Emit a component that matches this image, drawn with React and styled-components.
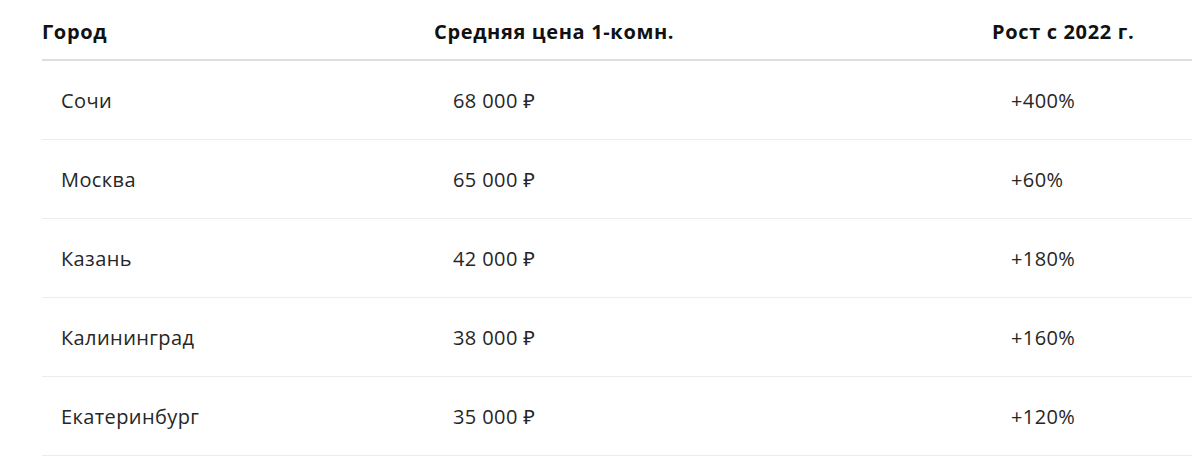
import React from "react";
import styled, { createGlobalStyle } from "styled-components";

const Global = createGlobalStyle`
  html, body { margin: 0; padding: 0; background: #fff; }
  body { font-family: "Open Sans", "Noto Sans", sans-serif; }
`;

const Wrap = styled.div`
  padding: 4px 8px 0 42px;
`;

const Table = styled.div`
  display: grid;
  grid-template-columns: 392px 558px 200px;
  width: 1150px;
`;

const HeadCell = styled.div`
  font-size: 20px;
  font-weight: 700;
  color: #111;
  line-height: 27px;
  padding: 14px 1px 14px 0;
  border-bottom: 2px solid #dedede;
  letter-spacing: 0.65px;
`;

const Cell = styled.div`
  font-size: 20px;
  color: #262626;
  line-height: 27px;
  padding: 26px 19px 25px;
  border-bottom: 1px solid #ececec;
  letter-spacing: 0.4px;
`;

const rows = [
  ["Сочи", "68 000 ₽", "+400%"],
  ["Москва", "65 000 ₽", "+60%"],
  ["Казань", "42 000 ₽", "+180%"],
  ["Калининград", "38 000 ₽", "+160%"],
  ["Екатеринбург", "35 000 ₽", "+120%"],
];

export default function App() {
  return (
    <>
      <Global />
      <Wrap>
        <Table>
          <HeadCell>Город</HeadCell>
          <HeadCell>Средняя цена 1-комн.</HeadCell>
          <HeadCell>Рост с 2022 г.</HeadCell>
          {rows.map((r) =>
            r.map((v, i) => <Cell key={r[0] + i}>{v}</Cell>)
          )}
        </Table>
      </Wrap>
    </>
  );
}
